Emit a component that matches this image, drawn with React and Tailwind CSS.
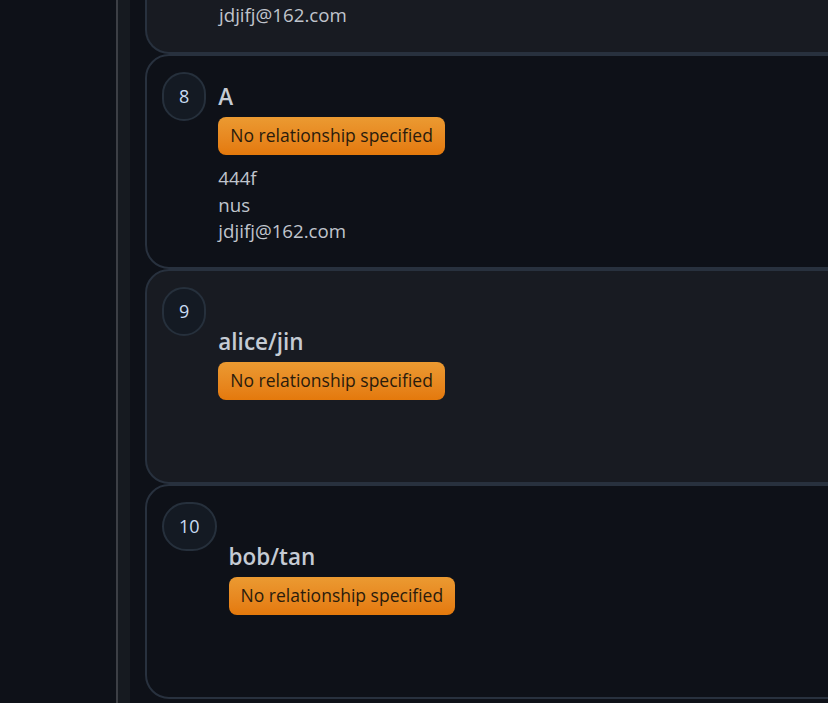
import React from 'react';

const contacts = [
  { id: 8, name: 'A', lines: ['444f', 'nus', 'jdjifj@162.com'] },
  { id: 9, name: 'alice/jin', lines: [], spacer: true },
  { id: 10, name: 'bob/tan', lines: [], spacer: true },
];

function Badge() {
  return (
    <span className="inline-flex items-center h-[38px] px-3 rounded-lg bg-gradient-to-b from-[#eb9a31] to-[#e4790b] text-[#2a1b0c] text-[17.5px] leading-none">
      No relationship specified
    </span>
  );
}

function ContactCard({ c, odd }) {
  return (
    <div
      className={`flex items-start gap-3 min-h-[215px] pl-[15px] pr-6 pt-4 pb-5 rounded-3xl border-2 border-[#28313e] ${
        odd ? 'bg-[#181b22]' : 'bg-[#0e1118]'
      }`}
    >
      <div className="shrink-0 h-[49px] px-[15px] flex items-center justify-center rounded-full border-2 border-[#26303c] bg-[#141a23] text-[#c9dcf3] text-[18px] font-medium">
        {c.id}
      </div>
      <div className="flex flex-col items-start">
        {c.spacer && <div className="h-[30px]" />}
        <div className="h-[45px] pt-[5px] flex items-center text-[22.5px] font-semibold text-[#c5cbd4] leading-none">
          {c.name}
        </div>
        <Badge />
        {c.lines.length > 0 && (
          <div className="mt-[10px] flex flex-col text-[18.7px] leading-[26.5px] text-[#c0c5cd]">
            {c.lines.map((l, i) => (
              <span key={i}>{l}</span>
            ))}
          </div>
        )}
      </div>
    </div>
  );
}

export default function App() {
  return (
    <div
      className="flex h-[703px] w-[828px] overflow-hidden bg-[#0e1118]"
      style={{ fontFamily: '"Open Sans", "Noto Sans", sans-serif' }}
    >
      <div className="w-[116px] shrink-0 bg-[#0e1118]" />
      <div className="w-[2px] shrink-0 bg-[#3c3f45]" />
      <div className="w-[12px] shrink-0 bg-[#161a20]" />
      <div className="flex-1 min-w-0 pl-[15px] -mr-10 flex flex-col">
        {/* tail of the previous card, scrolled mostly out of view */}
        <div className="h-[54px] shrink-0 pl-[72px] flex items-start rounded-b-3xl border-2 border-t-0 border-[#28313e] bg-[#181b22]">
          <span className="text-[18.7px] leading-[26.5px] mt-[2px] text-[#c0c5cd]">jdjifj@162.com</span>
        </div>
        {contacts.map((c, i) => (
          <ContactCard key={c.id} c={c} odd={i % 2 === 1} />
        ))}
      </div>
    </div>
  );
}
